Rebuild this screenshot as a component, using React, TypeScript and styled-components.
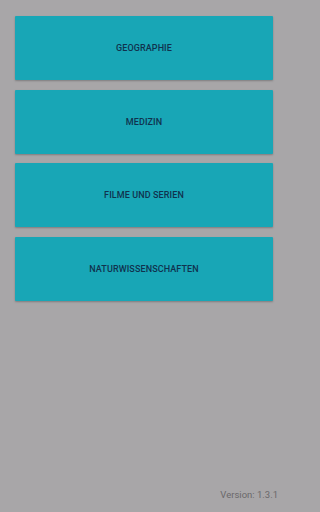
import React from 'react';
import styled, { createGlobalStyle } from 'styled-components';

const GlobalStyle = createGlobalStyle`
	html, body {
		margin: 0;
		padding: 0;
		height: 100%;
		background: #a8a6a8;
	}
	#root {
		height: 100%;
	}
`;

const Screen = styled.div`
	display: flex;
	flex-direction: column;
	width: 288px;
	height: 512px;
	box-sizing: border-box;
	padding: 16px 15px 12px;
	background: #a8a6a8;
	font-family: Roboto, 'Liberation Sans', sans-serif;
`;

const CategoryList = styled.div`
	display: flex;
	flex-direction: column;
	gap: 9.5px;
	flex: 1;
`;

const CategoryButton = styled.button`
	display: flex;
	align-items: center;
	justify-content: center;
	height: 64px;
	width: 100%;
	border: none;
	border-radius: 1px;
	background: #18a6b6;
	box-shadow: 0 1px 2px rgba(0, 0, 0, 0.25);
	color: #10324e;
	font-family: Roboto, 'Liberation Sans', sans-serif;
	font-size: 9px;
	font-weight: 500;
	letter-spacing: 0.1px;
	text-transform: uppercase;
	padding: 0;
	cursor: pointer;
`;

const Version = styled.div`
	align-self: flex-end;
	margin-right: -5px;
	color: #6a686a;
	font-size: 9.5px;
`;

const categories = ['Geographie', 'Medizin', 'Filme und Serien', 'Naturwissenschaften'];

const App: React.FC = () => {
	return (
		<>
			<GlobalStyle />
			<Screen>
				<CategoryList>
					{categories.map((name) => (
						<CategoryButton key={name}>{name}</CategoryButton>
					))}
				</CategoryList>
				<Version>Version: 1.3.1</Version>
			</Screen>
		</>
	);
};

export default App;
